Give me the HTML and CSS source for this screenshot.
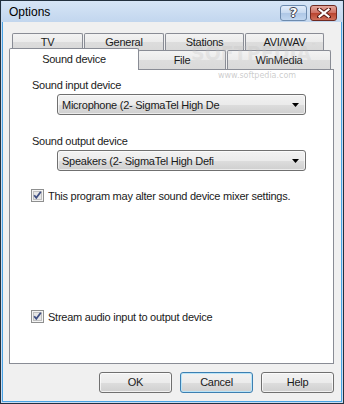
FILE: index.html
```html
<!DOCTYPE html>
<html>
<head>
<meta charset="utf-8">
<link rel="stylesheet" href="styles.css">
</head>
<body>
<div class="window">
  <div class="titlebar">
    <span class="title">Options</span>
    <div class="capbtns">
      <div class="capbtn help"><span>?</span></div>
      <div class="capbtn close">
        <svg width="14" height="10" viewBox="0 0 14 10"><path d="M2 1 L12 9 M12 1 L2 9" stroke="#5a1a14" stroke-width="4" stroke-linecap="square"/><path d="M2.5 1.5 L11.5 8.5 M11.5 1.5 L2.5 8.5" stroke="#fff" stroke-width="2.2" stroke-linecap="square"/></svg>
      </div>
    </div>
  </div>
  <div class="client">
    <div class="tabs">
      <div class="row row1">
        <div class="tab w-tv">TV</div>
        <div class="tab w-gen">General</div>
        <div class="tab w-sta">Stations</div>
        <div class="tab w-avi">AVI/WAV</div>
      </div>
      <div class="row row2">
        <div class="tab sel w-snd">Sound device</div>
        <div class="tab w-file">File</div>
        <div class="tab w-win">WinMedia</div>
      </div>
    </div>
    <div class="panel">
      <div class="label l1">Sound input device</div>
      <div class="combo"><span>Microphone (2- SigmaTel High De</span><svg class="arrow" width="7" height="4" viewBox="0 0 7 4"><path d="M0 0 H7 L3.5 4 Z" fill="#000"/></svg></div>
      <div class="label l2">Sound output device</div>
      <div class="combo"><span>Speakers (2- SigmaTel High Defi</span><svg class="arrow" width="7" height="4" viewBox="0 0 7 4"><path d="M0 0 H7 L3.5 4 Z" fill="#000"/></svg></div>
      <div class="check c1">
        <svg class="box" width="13" height="13" viewBox="0 0 13 13"><rect x="0.5" y="0.5" width="12" height="12" fill="#f4f4f4" stroke="#8e8f8f"/><rect x="2.5" y="2.5" width="8" height="8" fill="#e6e6e6" stroke="#c0c0c0"/><path d="M3.2 6.2 L5.3 8.8 L9.8 2.8" fill="none" stroke="#3f4f83" stroke-width="1.8"/></svg>
        <span>This program may alter sound device mixer settings.</span>
      </div>
      <div class="check c2">
        <svg class="box" width="13" height="13" viewBox="0 0 13 13"><rect x="0.5" y="0.5" width="12" height="12" fill="#f4f4f4" stroke="#8e8f8f"/><rect x="2.5" y="2.5" width="8" height="8" fill="#e6e6e6" stroke="#c0c0c0"/><path d="M3.2 6.2 L5.3 8.8 L9.8 2.8" fill="none" stroke="#3f4f83" stroke-width="1.8"/></svg>
        <span>Stream audio input to output device</span>
      </div>
    </div>
    <div class="buttons">
      <div class="btn">OK</div>
      <div class="btn def">Cancel</div>
      <div class="btn">Help</div>
    </div>
  </div>
  <div class="watermark">SOFTPEDIA<sup>™</sup></div>
  <div class="wm-url">www.softpedia.com</div>
</div>
</body>
</html>
```
FILE: styles.css
```css
html, body {
  margin: 0;
  padding: 0;
  background: #fff;
}
body {
  font-family: "Liberation Sans", Arial, sans-serif;
  font-size: 11px;
  line-height: 13px;
  letter-spacing: -0.25px;
  color: #1a1a1a;
}
.window {
  position: relative;
  width: 344px;
  height: 404px;
  box-sizing: border-box;
  border: 1px solid #22303e;
  background: #c9dcf2;
  padding: 0 1px 1px 1px;
  display: flex;
  flex-direction: column;
  overflow: hidden;
}
.titlebar {
  height: 21px;
  flex: none;
  display: flex;
  align-items: center;
  padding: 0 5px 0 7px;
  background: linear-gradient(#d6e5f6, #c2d6ee);
}
.title {
  font-size: 12px;
  letter-spacing: 0;
  color: #000;
  padding-top: 1px;
}
.capbtns {
  margin-left: auto;
  display: flex;
  gap: 3px;
  align-self: flex-start;
  margin-top: 4px;
}
.capbtn {
  width: 27px;
  height: 16px;
  box-sizing: border-box;
  border-radius: 3px;
  display: flex;
  align-items: center;
  justify-content: center;
}
.capbtn.help {
  border: 1px solid #6d8bae;
  background: linear-gradient(#e4eefa 0%, #c6d9f0 50%, #aec7e6 51%, #c0d6ef 100%);
}
.capbtn.help span {
  font-family: "DejaVu Sans", sans-serif;
  font-weight: bold;
  font-size: 13px;
  color: #fff;
  text-shadow: 0 0 1px #333, 1px 0 0 #445, -1px 0 0 #445, 0 1px 0 #445, 0 -1px 0 #445;
  line-height: 14px;
}
.capbtn.close {
  border: 1px solid #6e2a22;
  background: linear-gradient(#e3a89e 0%, #cf6e61 50%, #b9432f 51%, #d0705b 100%);
}
.client {
  flex: 1;
  background: #f0f0f0;
  border: 1px solid #4aa3e4;
  border-top: none;
  padding: 11px 7px 0 6px;
  display: flex;
  flex-direction: column;
}
.tabs {
  display: flex;
  flex-direction: column;
}
.row {
  display: flex;
  gap: 1px;
}
.row1 {
  height: 17px;
  padding-left: 3px;
}
.row2 {
  height: 19px;
  padding-left: 2px;
  align-items: flex-end;
}
.tab {
  box-sizing: border-box;
  height: 100%;
  border: 1px solid #898c95;
  border-bottom: none;
  border-radius: 2px 2px 0 0;
  background: linear-gradient(#f3f3f3 0%, #ebebeb 50%, #dddddd 51%, #d9d9d9 100%);
  text-align: center;
  padding-top: 2px;
}
.row2 .tab {
  height: 19px;
  padding-top: 3px;
}
.row2 .tab.sel {
  height: 22px;
  margin: 0 -2px -1px -2px;
  position: relative;
  z-index: 1;
  background: #fff;
  padding-top: 4px;
}
.w-tv { width: 71px; }
.w-gen { width: 80px; }
.w-sta { width: 79px; }
.w-avi { width: 79px; }
.w-snd { width: 130px; }
.w-file { width: 88px; }
.w-win { width: 104px; }
.panel {
  height: 295px;
  box-sizing: border-box;
  border: 1px solid #898c95;
  background: #fff;
  padding-left: 22px;
  display: flex;
  flex-direction: column;
  align-items: flex-start;
}
.label.l1 { margin-top: 9px; }
.label.l2 { margin-top: 20px; }
.combo {
  margin-top: 2px;
  margin-left: 25px;
  width: 249px;
  height: 21px;
  box-sizing: border-box;
  border: 1px solid #707070;
  border-radius: 3px;
  background: linear-gradient(#f2f2f2 0%, #ebebeb 50%, #dddddd 51%, #cfcfcf 100%);
  box-shadow: inset 0 0 0 1px rgba(255,255,255,0.6);
  display: flex;
  align-items: center;
  padding: 0 0 0 4px;
}
.combo span { flex: 1; padding-top: 1px; }
.combo .arrow { margin-right: 6px; margin-top: 1px; }
.check {
  display: flex;
  align-items: center;
  gap: 4px;
  margin-left: -1px;
  height: 13px;
}
.check span { padding-top: 1px; }
.check.c1 { margin-top: 18px; }
.check.c2 { margin-top: 108px; }
.box { flex: none; }
.buttons {
  display: flex;
  justify-content: flex-end;
  gap: 8px;
  margin-top: 8px;
}
.btn {
  width: 73px;
  height: 21px;
  box-sizing: border-box;
  border: 1px solid #707070;
  border-radius: 3px;
  background: linear-gradient(#f2f2f2 0%, #ebebeb 50%, #dddddd 51%, #cfcfcf 100%);
  box-shadow: inset 0 0 0 1px rgba(255,255,255,0.7);
  text-align: center;
  line-height: 19px;
}
.btn.def {
  border-color: #3c7fb1;
  box-shadow: inset 0 0 0 1px #b9e4f8;
}
.watermark {
  position: absolute;
  left: 190px;
  top: 40px;
  font-family: "DejaVu Sans", sans-serif;
  font-size: 19px;
  font-weight: bold;
  letter-spacing: 0;
  color: rgba(190, 190, 190, 0.25);
  line-height: 24px;
  pointer-events: none;
}
.watermark sup {
  font-size: 5px;
  vertical-align: top;
  line-height: 8px;
}
.wm-url {
  position: absolute;
  left: 217px;
  top: 70px;
  font-family: "DejaVu Sans", sans-serif;
  font-size: 8px;
  color: rgba(170, 170, 170, 0.6);
  letter-spacing: 0;
  line-height: 10px;
}
```
